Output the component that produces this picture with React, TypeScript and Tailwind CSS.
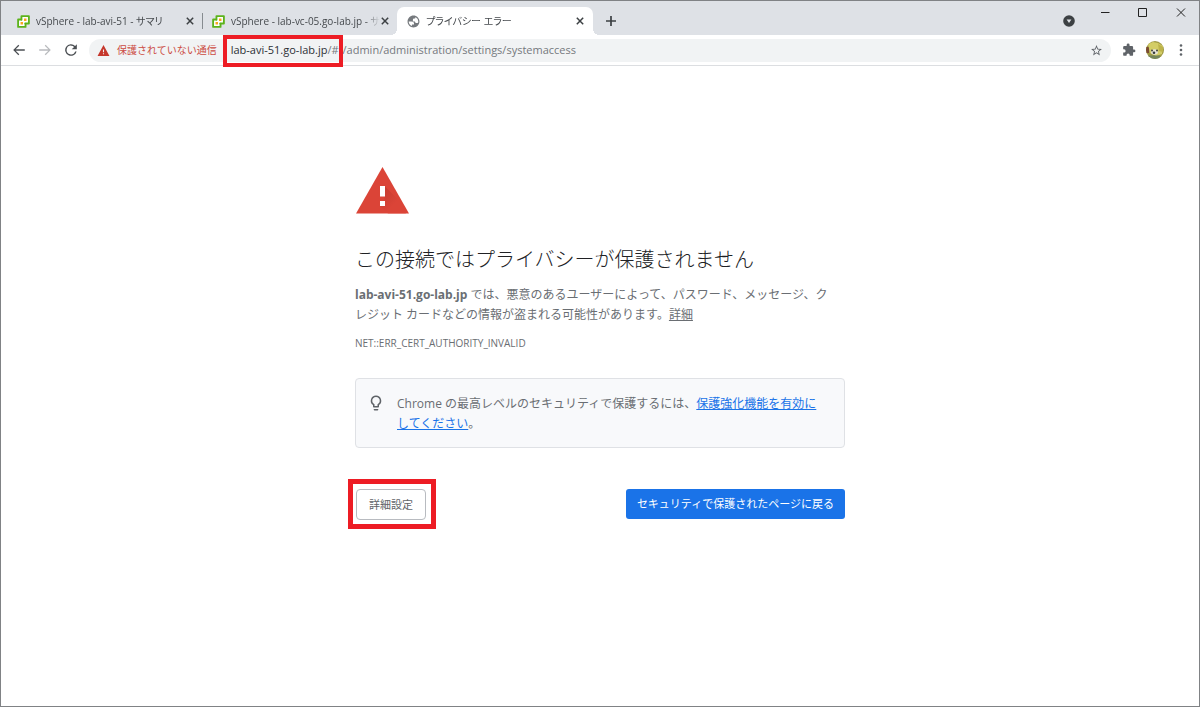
import type { ReactNode } from "react";

function VSphereIcon() {
  return (
    <svg viewBox="0 0 14 14" className="size-[13px] shrink-0" aria-hidden="true">
      <path d="M4.800 1.200h8v8H9.200v3.600h-8v-8h3.600z" fill="#fff" stroke="#5cb31b" strokeWidth="2" strokeLinejoin="round" />
      <path d="M4.800 4.800v1.200M9.200 9.200H8" stroke="#5cb31b" strokeWidth="1.500" />
      <path d="M7.500 3.800h2.700v2.700H7.500zM3.800 7.500h2.700v2.700H3.800z" fill="#f8a61c" />
    </svg>
  );
}

function GlobeIcon() {
  return (
    <svg viewBox="0 0 24 24" className="size-[13px] shrink-0 scale-110" fill="#767a7e" aria-hidden="true">
      <path d="M12 2C6.480 2 2 6.480 2 12s4.480 10 10 10 10-4.480 10-10S17.520 2 12 2zM4 12h4.400c3.400.020 4.900 1.730 4.500 5.150H9.500v2.460A8 8 0 0 1 4 12zm16 0c0 .5-.05 1-.14 1.480-.56.680-1.430 1.020-2.610 1.020-1.830 0-2.750-.840-2.750-2.500H11V9.500c.17-1.670 1-2.500 2.500-2.500h1.250c-.02-1.250.29-2.010.93-2.290A8 8 0 0 1 20 12z" />
    </svg>
  );
}

function CloseIcon() {
  return (
    <svg viewBox="0 0 8 8" className="size-[8px]" stroke="#3c4043" strokeWidth="1.500" aria-hidden="true">
      <path d="M.8.8l6.400 6.400M7.200.8L.8 7.200" />
    </svg>
  );
}

function Tab({ icon, title, active }: { icon: ReactNode; title: string; active?: boolean }) {
  return (
    <div
      className={
        active
          ? "relative flex h-[28px] w-[196px] items-center rounded-t-[7px] bg-white pr-[9px] pl-[10px]"
          : "flex h-[28px] w-[194px] items-center pr-[7px] pl-[10px]"
      }
    >
      {active && (
        <>
          <span className="absolute bottom-0 -left-[6px] size-[6px] bg-[radial-gradient(circle_at_0_0,transparent_6px,white_6px)]" />
          <span className="absolute -right-[6px] bottom-0 size-[6px] bg-[radial-gradient(circle_at_100%_0,transparent_6px,white_6px)]" />
        </>
      )}
      {icon}
      <span className="ml-[6px] min-w-0 flex-1 overflow-hidden mask-r-from-90% text-[10px] leading-4 whitespace-nowrap text-[#45494d] [font-feature-settings:'palt']">
        {title}
      </span>
      <button aria-label="タブを閉じる" className="ml-px flex size-[8px] shrink-0 items-center justify-center">
        <CloseIcon />
      </button>
    </div>
  );
}

function TabStrip() {
  return (
    <header className="flex h-[34px] items-end bg-[#dee1e6] pl-[6px]">
      <Tab icon={<VSphereIcon />} title="vSphere - lab-avi-51 - サマリ" />
      <span className="mb-[6px] h-[16px] w-px translate-x-px bg-[#868b90]" />
      <Tab icon={<VSphereIcon />} title="vSphere - lab-vc-05.go-lab.jp - サ" />
      <span className="w-px" />
      <Tab icon={<GlobeIcon />} title="プライバシー エラー" active />
      <button aria-label="新しいタブ" className="mb-[8px] ml-[12px] flex size-[12px] items-center justify-center">
        <svg viewBox="0 0 12 12" className="size-[12px]" stroke="#3c4043" strokeWidth="1.700">
          <path d="M6 1v10M1 6h10" />
        </svg>
      </button>
      <div className="flex flex-1 items-start justify-end self-stretch">
        <button aria-label="タブを検索" className="mt-[14px] mr-[25px]">
          <svg viewBox="0 0 12 12" className="size-[12px]">
            <circle cx="6" cy="6" r="5.800" fill="#3c4043" />
            <path d="M3.600 4.500h4.800L6 8z" fill="#dee1e6" />
          </svg>
        </button>
        <button aria-label="最小化" className="mt-[7px] mr-[28px]">
          <svg viewBox="0 0 10 10" className="size-[10px]" stroke="#222">
            <path d="M1 4.500h8.500" />
          </svg>
        </button>
        <button aria-label="最大化" className="mt-[7px] mr-[28px]">
          <svg viewBox="0 0 10 10" className="size-[10px]" stroke="#222" fill="none">
            <path d="M.5.5h8v8h-8z" />
          </svg>
        </button>
        <button aria-label="閉じる" className="mt-[7px] mr-[13px]">
          <svg viewBox="0 0 10 10" className="size-[10px]" stroke="#222">
            <path d="M1 .5l8 8M9 .5l-8 8" />
          </svg>
        </button>
      </div>
    </header>
  );
}

function Avatar() {
  return (
    <svg viewBox="0 0 18 18" className="size-[18px]" aria-hidden="true">
      <defs>
        <clipPath id="avatar">
          <circle cx="9" cy="9" r="9" />
        </clipPath>
      </defs>
      <g clipPath="url(#avatar)">
        <path d="M0 0h18v18H0z" fill="#a09a45" />
        <path d="M0 6h3v6H0z" fill="#7a4a33" />
        <path d="M2 3l5-2 5 1 5 3-1 8-6 2-6-3z" fill="#d3cd66" />
        <path d="M12 3l5 3v5l-4-1z" fill="#bdb34a" />
        <ellipse cx="8.500" cy="11" rx="3.500" ry="2.800" fill="#e6e3d6" />
        <path d="M2 14.500h12V18H2z" fill="#75865c" />
        <circle cx="6" cy="9.500" r="1" fill="#44443a" />
        <circle cx="11" cy="9.500" r="1" fill="#44443a" />
        <circle cx="8" cy="11.800" r="1.300" fill="#33383c" />
      </g>
    </svg>
  );
}

function Toolbar() {
  return (
    <nav className="flex h-[31px] items-center border-b border-[#dcdee1] bg-white pr-[16px] pl-[11px]">
      <button aria-label="戻る" className="mr-[12px]">
        <svg viewBox="0 0 24 24" className="size-[14px] scale-110" fill="#4b4f53">
          <path d="M21 11H6.830l5.580-5.590L11 4l-8 8 8 8 1.410-1.410L6.830 13H21z" />
        </svg>
      </button>
      <button aria-label="進む" className="mr-[12px]">
        <svg viewBox="0 0 24 24" className="size-[14px] scale-110" fill="#b9bbbe">
          <path d="M3 11h14.170l-5.580-5.590L13 4l8 8-8 8-1.410-1.410L17.170 13H3z" />
        </svg>
      </button>
      <button aria-label="再読み込み" className="mr-[11px]">
        <svg viewBox="0 0 24 24" className="size-[14px] scale-125" fill="#4b4f53">
          <path d="M17.650 6.350A8 8 0 1 0 19.730 14h-2.080A6 6 0 1 1 12 6c1.660 0 3.140.690 4.220 1.780L13 11h7V4z" />
        </svg>
      </button>
      <div className="flex h-[23px] flex-1 items-center rounded-full bg-[#f1f3f4] px-[8px]">
        <svg viewBox="0 0 24 24" className="mr-[7px] size-[13px] shrink-0" fill="#c5372c" aria-hidden="true">
          <path d="M1 22h22L12 2zm12-3h-2v-2h2zm0-4h-2v-5h2z" />
        </svg>
        <span className="text-[10px] leading-4 whitespace-nowrap text-[#cc4b42]">保護されていない通信</span>
        <div className="relative ml-[14px] flex flex-1 text-[11px] leading-4 whitespace-nowrap text-[#75797d]">
          <span>
            <span className="text-[#2c3034]">lab-avi-51.go-lab.jp</span>/#
          </span>
          <span className="ml-[4px]">/admin/administration/settings/systemaccess</span>
          <span className="absolute -top-[7px] -left-[8px] h-[32px] w-[120px] border-4 border-[#ed1c24]" />
        </div>
        <button aria-label="このタブをブックマークに追加します">
          <svg viewBox="0 0 24 24" className="size-[13px]" fill="#5f6368">
            <path d="M22 9.240l-7.190-.620L12 2 9.190 8.630 2 9.240l5.460 4.730L5.820 21 12 17.270 18.180 21l-1.630-7.030zM12 15.400l-3.760 2.270 1-4.280-3.320-2.880 4.380-.380L12 6.100l1.710 4.040 4.380.380-3.320 2.880 1 4.280z" />
          </svg>
        </button>
      </div>
      <button aria-label="拡張機能" className="ml-[11px]">
        <svg viewBox="0 0 24 24" className="size-[14px]" fill="#5f6368">
          <path d="M20.500 11H19V7a2 2 0 0 0-2-2h-4V3.500a2.500 2.500 0 0 0-5 0V5H4a2 2 0 0 0-2 2v3.800h1.500a2.700 2.700 0 0 1 0 5.400H2V20a2 2 0 0 0 2 2h3.800v-1.500a2.700 2.700 0 0 1 5.400 0V22H17a2 2 0 0 0 2-2v-4h1.500a2.500 2.500 0 0 0 0-5z" />
        </svg>
      </button>
      <button aria-label="プロフィール" className="ml-[10px]">
        <Avatar />
      </button>
      <button aria-label="メニュー" className="ml-[15px]">
        <svg viewBox="0 0 4 14" className="h-[14px] w-[4px]" fill="#5f6368">
          <circle cx="2" cy="2.500" r="1.300" />
          <circle cx="2" cy="7" r="1.300" />
          <circle cx="2" cy="11.500" r="1.300" />
        </svg>
      </button>
    </nav>
  );
}

function WarningIcon() {
  return (
    <svg viewBox="0 0 54 47" className="h-[47px] w-[54px]" aria-hidden="true">
      <defs>
        <linearGradient id="shade" x1="0" y1="0" x2="1" y2="1">
          <stop offset="0" stopColor="#b5352b" />
          <stop offset=".6" stopColor="#db4437" />
        </linearGradient>
      </defs>
      <path d="M27.500 0l26.500 46.500H1z" fill="#db4437" />
      <path d="M29.500 19L43 32.500 51 46.500H33l-8-7.500 4.500-5z" fill="url(#shade)" opacity=".7" />
      <path d="M25 19h5v10.500h-5zM25 34h5v5h-5z" fill="#fff" />
    </svg>
  );
}

function BulbIcon() {
  return (
    <svg viewBox="0 0 24 24" className="mx-px size-[18px] shrink-0" fill="#5f6368" aria-hidden="true">
      <path d="M9 21c0 .550.450 1 1 1h4c.550 0 1-.450 1-1v-1H9zm3-19a7 7 0 0 0-4 12.740V17c0 .550.450 1 1 1h6c.550 0 1-.450 1-1v-2.260A7 7 0 0 0 12 2zm2.850 11.100l-.850.600V16h-4v-2.300l-.850-.600A5 5 0 1 1 14.850 13.100z" />
    </svg>
  );
}

export default function App() {
  return (
    <div
      className="flex min-h-screen flex-col border border-[#808285] bg-white font-['Open_Sans','Noto_Sans_CJK_JP',sans-serif]"
      lang="ja"
    >
      <TabStrip />
      <Toolbar />
      <main className="mx-auto w-full max-w-[490px] pt-[101px] text-[12px] text-[#6a6e73]">
        <WarningIcon />
        <h1 className="mt-[32px] text-[20px] leading-7 font-light text-[#202124]">
          この接続ではプライバシーが保護されません
        </h1>
        <p className="mt-[11px] leading-5">
          <strong className="font-bold">lab-avi-51.go-lab.jp</strong>{" "}
          では、悪意のあるユーザーによって、パスワード、メッセージ、ク
          <br />
          レジット カードなどの情報が盗まれる可能性があります。
          <a href="#details" className="underline">詳細</a>
        </p>
        <p className="mt-[8px] text-[10px] leading-5">NET::ERR_CERT_AUTHORITY_INVALID</p>
        <section className="mt-[25px] flex gap-[11px] rounded-[4px] border border-[#dfe1e5] bg-[#f8f9fb] pt-[15px] pr-[16px] pb-[13px] pl-[10px]">
          <BulbIcon />
          <p className="leading-5">
            Chrome の最高レベルのセキュリティで保護するには、
            <a href="#enhanced" className="text-[#1a73e8] underline">
              保護強化機能を有効に
              <br />
              してください
            </a>
            。
          </p>
        </section>
        <div className="mt-[31px] flex items-center justify-between">
          <div className="-ml-[7px] border-5 border-[#ed1c24] pt-[5px] pr-[5px] pb-[4px] pl-[3px]">
            <button className="h-[31px] rounded-[4px] border border-[#b8bbc0] px-[12px] text-[11px] leading-4 text-[#5f6368]">
              詳細設定
            </button>
          </div>
          <button className="h-[30px] rounded-[3px] bg-[#1a73e8] px-[11px] text-[11px] leading-4 text-white">
            セキュリティで保護されたページに戻る
          </button>
        </div>
      </main>
    </div>
  );
}
